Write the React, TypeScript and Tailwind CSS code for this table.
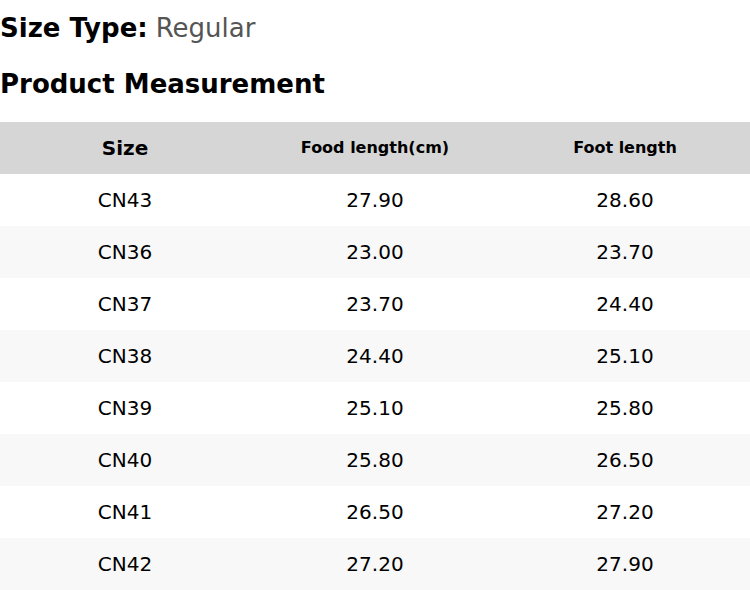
const rows = [
  ['CN43', '27.90', '28.60'],
  ['CN36', '23.00', '23.70'],
  ['CN37', '23.70', '24.40'],
  ['CN38', '24.40', '25.10'],
  ['CN39', '25.10', '25.80'],
  ['CN40', '25.80', '26.50'],
  ['CN41', '26.50', '27.20'],
  ['CN42', '27.20', '27.90'],
];

function App() {
  return (
    <div className="w-[750px] bg-white text-black font-['DejaVu_Sans',sans-serif]">
      {/* Header */}
      <div className="h-[56px] flex items-center text-[26px]">
        <span className="font-bold">Size Type:</span>
        <span className="ml-[8px] text-[#555555]">Regular</span>
      </div>
      <div className="h-[56px] flex items-center text-[26px] font-bold">Product Measurement</div>

      {/* Measurement table */}
      <div className="mt-[10px]">
        <div className="grid grid-cols-3 h-[52px] items-center bg-[#d6d6d6] font-bold">
          <div className="text-center text-[20px]">Size</div>
          <div className="text-center text-[16px]">Food length(cm)</div>
          <div className="text-center text-[16px]">Foot length</div>
        </div>
        {rows.map((r, i) => (
          <div
            key={r[0]}
            className={`grid grid-cols-3 h-[52px] items-center text-[20px] ${i % 2 === 1 ? 'bg-[#f8f8f8]' : 'bg-white'}`}
          >
            {r.map((c, j) => (
              <div key={j} className="text-center">{c}</div>
            ))}
          </div>
        ))}
      </div>
    </div>
  );
}

export default App;
